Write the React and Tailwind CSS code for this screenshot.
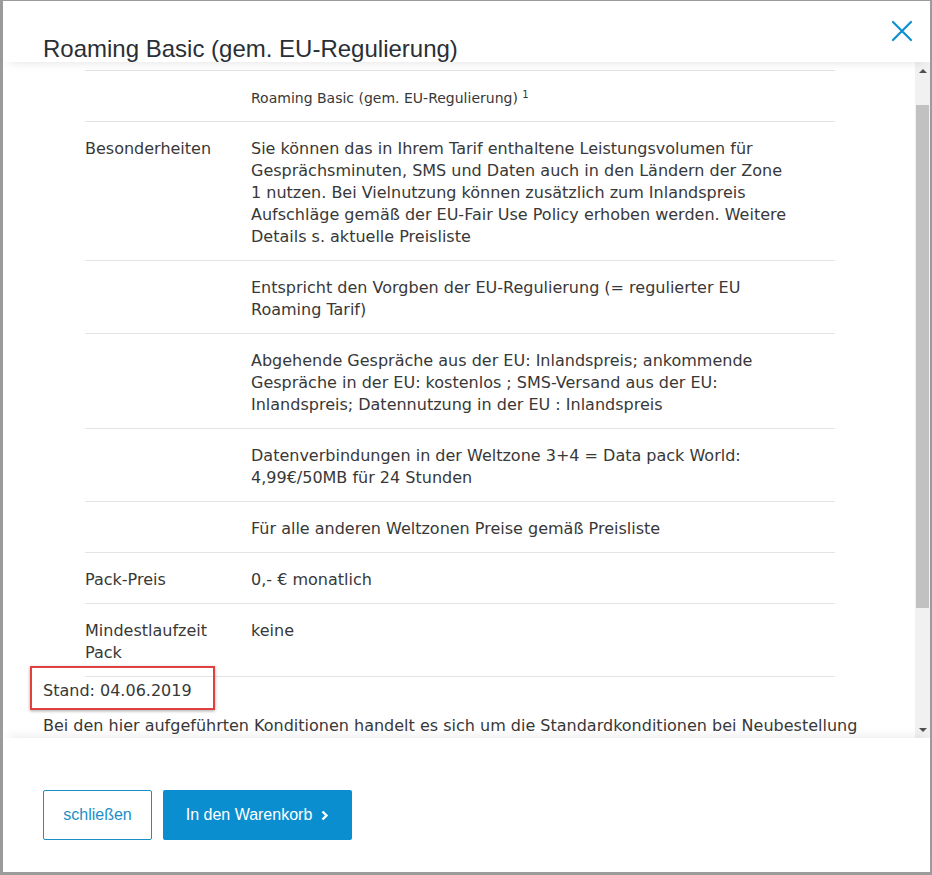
import React from 'react'

const rows = [
  {
    label: '',
    value: (
      <span className="text-[14px]">
        Roaming Basic (gem. EU-Regulierung) <span className="relative -top-[5px] text-[10px] leading-none">1</span>
      </span>
    ),
  },
  {
    label: 'Besonderheiten',
    value:
      'Sie können das in Ihrem Tarif enthaltene Leistungsvolumen für Gesprächsminuten, SMS und Daten auch in den Ländern der Zone 1 nutzen. Bei Vielnutzung können zusätzlich zum Inlandspreis Aufschläge gemäß der EU-Fair Use Policy erhoben werden. Weitere Details s. aktuelle Preisliste',
  },
  { label: '', value: 'Entspricht den Vorgben der EU-Regulierung (= regulierter EU Roaming Tarif)' },
  {
    label: '',
    value:
      'Abgehende Gespräche aus der EU: Inlandspreis; ankommende Gespräche in der EU: kostenlos ; SMS-Versand aus der EU: Inlandspreis; Datennutzung in der EU : Inlandspreis',
  },
  { label: '', value: 'Datenverbindungen in der Weltzone 3+4 = Data pack World: 4,99€/50MB für 24 Stunden' },
  { label: '', value: 'Für alle anderen Weltzonen Preise gemäß Preisliste' },
  { label: 'Pack-Preis', value: '0,- € monatlich' },
  { label: 'Mindestlaufzeit Pack', value: 'keine' },
]

function Scrollbar() {
  return (
    <div className="w-[15px] shrink-0 bg-[#f1f1f1] flex flex-col items-center">
      <div className="h-[17px] flex items-center justify-center">
        <div className="w-0 h-0 border-l-[4px] border-r-[4px] border-b-[4px] border-l-transparent border-r-transparent border-b-[#505050]" />
      </div>
      <div className="h-[26px]" />
      <div className="w-[13px] h-[503px] bg-[#c1c1c1]" />
      <div className="flex-1" />
      <div className="h-[17px] flex items-center justify-center">
        <div className="w-0 h-0 border-l-[4px] border-r-[4px] border-t-[4px] border-l-transparent border-r-transparent border-t-[#505050]" />
      </div>
    </div>
  )
}

export default function App() {
  return (
    <div className="w-[932px] h-[875px] bg-white overflow-hidden">
      <div className="h-full flex flex-col border-l-[3px] border-t border-r-2 border-b-[3px] border-[#9b9b9b] bg-white">
        {/* header */}
        <div className="relative z-10 h-[61px] shrink-0 flex items-start justify-between pl-[40px] pr-[16px] shadow-[0_6px_10px_-6px_rgba(0,0,0,0.12)]">
          <h2 className="mt-[34px] text-[24px] leading-[28px] text-[#2a2f36]" style={{ fontFamily: '"Liberation Sans", Arial, sans-serif' }}>
            Roaming Basic (gem. EU-Regulierung)
          </h2>
          <button className="mt-[18px] w-[24px] h-[24px] flex items-center justify-center">
            <svg width="22" height="22" viewBox="0 0 22 22" fill="none" stroke="#0d8fd1" strokeWidth="2.2" strokeLinecap="round">
              <path d="M2 2 L20 20 M20 2 L2 20" />
            </svg>
          </button>
        </div>

        {/* scroll area */}
        <div className="h-[676px] shrink-0 flex overflow-hidden">
          <div className="flex-1 min-w-0 pt-[8px] text-[#383838] text-[16px] leading-[22px]" style={{ fontFamily: '"DejaVu Sans", Verdana, sans-serif' }}>
            <div className="ml-[82px] w-[750px] border-t border-[#e3e3e3]">
              {rows.map((r, i) => (
                <div key={i} className="flex border-b border-[#e3e3e3] pt-[16px] pb-[12px]">
                  <div className="w-[166px] shrink-0 pr-[20px]">{r.label}</div>
                  <div className="flex-1 pr-[42px]">{r.value}</div>
                </div>
              ))}
            </div>
            <div className="pl-[40px]">
              <div className="relative inline-block mt-[2px] leading-[24px]">
                Stand: 04.06.2019
                <div className="absolute -left-[13px] -top-[13px] w-[185px] h-[44px] border-2 border-[#e0413f] shadow-[0_1px_3px_rgba(0,0,0,0.35)]" />
              </div>
              <p className="mt-[12px] whitespace-nowrap">Bei den hier aufgeführten Konditionen handelt es sich um die Standardkonditionen bei Neubestellung</p>
            </div>
          </div>
          <Scrollbar />
        </div>

        {/* footer */}
        <div className="relative z-10 flex-1 flex items-start gap-[11px] pl-[40px] pt-[52px] shadow-[0_-8px_10px_-6px_rgba(0,0,0,0.08)]" style={{ fontFamily: '"Liberation Sans", Arial, sans-serif' }}>
          <button className="w-[109px] h-[50px] rounded-[2px] border border-[#1b8fc4] text-[#1a8fc7] text-[16px]">
            schließen
          </button>
          <button className="w-[189px] h-[50px] rounded-[2px] bg-[#0b8ed0] text-white text-[16px] flex items-center justify-center gap-[9px]">
            In den Warenkorb
            <svg width="8" height="11" viewBox="0 0 8 11" fill="none" stroke="white" strokeWidth="2.4">
              <path d="M1.5 1.5 L5.5 5.5 L1.5 9.5" />
            </svg>
          </button>
        </div>
      </div>
    </div>
  )
}
